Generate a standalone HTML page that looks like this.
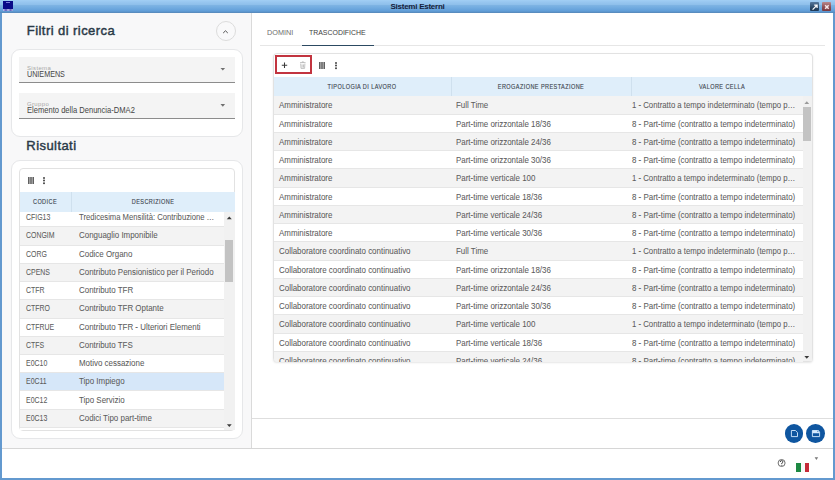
<!DOCTYPE html>
<html><head><meta charset="utf-8">
<style>
*{box-sizing:border-box;margin:0;padding:0}
html,body{width:835px;height:480px;overflow:hidden;background:#6399cf;font-family:"Liberation Sans",sans-serif;position:relative}
div,span{position:absolute}
#title{left:0;top:0;width:835px;height:13px;background:linear-gradient(#a2cff4 0px,#98c7f0 2px,#8fc0eb 4.5px,#7db3e3 5.5px,#70aadf 8px,#619ed8 11px,#5b92c8 12px,#5686b6 13px)}
#title .t{left:0;width:835px;top:2px;line-height:9px;text-align:center;font:bold 8px "Liberation Sans",sans-serif;color:#15203a;letter-spacing:-0.25px}
#client{left:2px;top:13px;width:831px;height:465px;background:#fff}
#leftp{left:2px;top:13px;width:249px;height:435px;background:#f8f8f9}
#vdiv{left:251px;top:13px;width:1px;height:435px;background:#dadada}
#hdiv{left:2px;top:448px;width:831px;height:1px;background:#d6d6d6}
.h{font-weight:normal;font-size:13px;line-height:13px;color:#2a3a48;letter-spacing:0.44px;-webkit-text-stroke:0.45px #2a3a48;white-space:nowrap}
.card{background:#fff;border:1px solid #e6e7e9;border-radius:9px}
.field{background:#f4f4f4;border-bottom:1.5px solid #8c8c8c}
.lbl{font-size:6px;line-height:6px;color:#a8a8a8;letter-spacing:0.35px;white-space:nowrap}
.val{font-size:8px;line-height:8px;color:#444;white-space:nowrap}
.arr{width:0;height:0;border-left:2.5px solid transparent;border-right:2.5px solid transparent;border-top:3px solid #7a7a7a}
.tbox{background:#fff;border:1px solid #e2e2e2;border-radius:4px}
.hdr{background:#dfeefa}
.ht{font-weight:normal;font-size:6.7px;line-height:6px;color:#3a434c;letter-spacing:0.5px;-webkit-text-stroke:0.12px #3a434c;white-space:nowrap}
.rr{left:273.5px;height:18.27px;width:529px;border-bottom:1px solid #e6e6e6;background:#fff}
.rl{left:20px;width:204px;height:18.23px;border-bottom:1px solid #e6e6e6;background:#fff}
.rr span,.rl span{top:5px;font-size:8.4px;line-height:8px;color:#5c5c5c;-webkit-text-stroke:0.05px #5c5c5c;white-space:nowrap;transform:scaleX(0.948);transform-origin:0 0}
.rr span{margin-left:-273.5px}
.rl span{margin-left:-20px;margin-top:-1px}
.alt{background:#f3f3f3}
.sel{background:#d6e7f9}
.sb{background:#f1f1f1}
.thumb{background:#c3c3c3}
.up{width:0;height:0;border-left:2.5px solid transparent;border-right:2.5px solid transparent;border-bottom:2.5px solid #6a6a6a}
.dn{width:0;height:0;border-left:2.5px solid transparent;border-right:2.5px solid transparent;border-top:2.5px solid #6a6a6a}
.bars{width:6px;height:7px;background:linear-gradient(90deg,#555 0,#555 1.5px,transparent 1.5px,transparent 2.25px,#555 2.25px,#555 3.75px,transparent 3.75px,transparent 4.5px,#555 4.5px,#555 6px)}
.dots{width:2px;height:2px;background:#444;border-radius:1px;box-shadow:0 2.6px 0 #444,0 5.2px 0 #444}
.tab{font-size:7.8px;line-height:8px;letter-spacing:-0.5px;white-space:nowrap}
.fab{width:18.8px;height:18.8px;border-radius:50%;background:#0f56a0}
</style></head><body>
<div id="title"><div class="t">Sistemi Esterni</div></div>
<!-- title icons -->
<div style="left:3px;top:1px;width:10px;height:7.5px;background:#0a0a88"></div>
<div style="left:3px;top:8.5px;width:10px;height:2.8px;background:linear-gradient(90deg,#c0c4f0,#5a5ab8 30%,#b8bce8 50%,#6a6ac0 75%,#a8b0e0)"></div>
<div style="left:6px;top:2px;width:4px;height:1px;background:#7a7ad8"></div>
<div style="left:810.4px;top:1.8px;width:8.6px;height:9px;background:linear-gradient(#56799e,#2a4866 60%,#1f3a56);border-radius:1px"></div>
<div style="left:821.5px;top:1.8px;width:9.2px;height:9px;background:linear-gradient(#b9898d,#8a4a50 60%,#7a3a42);border-radius:1px"></div>
<svg style="position:absolute;left:810px;top:1.5px" width="10" height="10" viewBox="0 0 10 10"><path d="M2.6 7.6 L6.6 3.6 M4.2 3.1 H7.1 V6" stroke="#fff" stroke-width="1.25" fill="none"/></svg>
<svg style="position:absolute;left:821.5px;top:1.5px" width="10" height="10" viewBox="0 0 10 10"><path d="M3.1 3.2 L6.7 6.8 M6.7 3.2 L3.1 6.8" stroke="#f6e6e8" stroke-width="1.5" fill="none"/></svg>

<div id="client"></div>
<div id="leftp"></div>
<div id="vdiv"></div>
<div id="hdiv"></div>

<!-- LEFT PANEL -->
<div class="h" style="left:26.8px;top:24.3px">Filtri di ricerca</div>
<div style="left:215.5px;top:21px;width:20px;height:20px;border-radius:50%;border:1px solid #dcdcdc;background:#f9f9fa"></div>
<svg style="position:absolute;left:221px;top:27.5px" width="9" height="7" viewBox="0 0 9 7"><path d="M2.2 5 L4.5 2.8 L6.8 5" stroke="#505050" stroke-width="1" fill="none"/></svg>

<div class="card" style="left:10.5px;top:49.3px;width:232.8px;height:88px"></div>
<div class="field" style="left:19px;top:57px;width:216px;height:26px"></div>
<div class="lbl" style="left:27px;top:65px">Sistema</div>
<div class="val" style="left:27px;top:70.3px;font-size:8.4px;transform:scaleX(0.857);transform-origin:0 0">UNIEMENS</div>

<div class="field" style="left:19px;top:93px;width:216px;height:26px"></div>
<div class="lbl" style="left:27px;top:101px">Gruppo</div>
<div class="val" style="left:27px;top:106px;font-size:8.4px;transform:scaleX(0.905);transform-origin:0 0">Elemento della Denuncia-DMA2</div>


<div class="h" style="left:26.3px;top:138.5px">Risultati</div>
<div class="card" style="left:10.8px;top:160.4px;width:232.5px;height:278.5px"></div>
<div class="tbox" style="left:19px;top:168px;width:216px;height:262.5px;overflow:hidden">
</div>
<svg style="position:absolute;left:27.5px;top:177px" width="6" height="7" viewBox="0 0 6 7"><rect x="0" y="0" width="1.6" height="7" fill="#606060"/><rect x="2.2" y="0" width="1.6" height="7" fill="#606060"/><rect x="4.4" y="0" width="1.6" height="7" fill="#606060"/></svg>
<div class="dots" style="left:43.2px;top:177px"></div>
<div class="hdr" style="left:19.5px;top:192px;width:215px;height:19.5px"></div>
<div style="left:70.75px;top:192px;width:1px;height:19.5px;background:#cfe0ee"></div>
<div style="left:20px;top:211.5px;width:214px;height:218.5px;overflow:hidden">
<div style="left:-20px;top:-211.5px;width:835px;height:480px">
<div class="rl " style="top:209.20px"><span style="left:25.6px;font-size:8.4px;letter-spacing:0;transform:scaleX(0.83);transform-origin:0 0">CFIG13</span><span style="left:78.75px;transform:scaleX(0.916)">Tredicesima Mensilità: Contribuzione …</span></div>
<div class="rl alt" style="top:227.43px"><span style="left:25.6px;font-size:8.4px;letter-spacing:0;transform:scaleX(0.83);transform-origin:0 0">CONGIM</span><span style="left:78.75px">Conguaglio Imponibile</span></div>
<div class="rl " style="top:245.66px"><span style="left:25.6px;font-size:8.4px;letter-spacing:0;transform:scaleX(0.83);transform-origin:0 0">CORG</span><span style="left:78.75px">Codice Organo</span></div>
<div class="rl alt" style="top:263.89px"><span style="left:25.6px;font-size:8.4px;letter-spacing:0;transform:scaleX(0.83);transform-origin:0 0">CPENS</span><span style="left:78.75px">Contributo Pensionistico per il Periodo</span></div>
<div class="rl " style="top:282.12px"><span style="left:25.6px;font-size:8.4px;letter-spacing:0;transform:scaleX(0.83);transform-origin:0 0">CTFR</span><span style="left:78.75px">Contributo TFR</span></div>
<div class="rl alt" style="top:300.35px"><span style="left:25.6px;font-size:8.4px;letter-spacing:0;transform:scaleX(0.83);transform-origin:0 0">CTFRO</span><span style="left:78.75px">Contributo TFR Optante</span></div>
<div class="rl " style="top:318.58px"><span style="left:25.6px;font-size:8.4px;letter-spacing:0;transform:scaleX(0.83);transform-origin:0 0">CTFRUE</span><span style="left:78.75px">Contributo TFR - Ulteriori Elementi</span></div>
<div class="rl alt" style="top:336.81px"><span style="left:25.6px;font-size:8.4px;letter-spacing:0;transform:scaleX(0.83);transform-origin:0 0">CTFS</span><span style="left:78.75px">Contributo TFS</span></div>
<div class="rl " style="top:355.04px"><span style="left:25.6px;font-size:8.4px;letter-spacing:0;transform:scaleX(0.83);transform-origin:0 0">E0C10</span><span style="left:78.75px">Motivo cessazione</span></div>
<div class="rl sel" style="top:373.27px"><span style="left:25.6px;font-size:8.4px;letter-spacing:0;transform:scaleX(0.83);transform-origin:0 0">E0C11</span><span style="left:78.75px">Tipo Impiego</span></div>
<div class="rl " style="top:391.50px"><span style="left:25.6px;font-size:8.4px;letter-spacing:0;transform:scaleX(0.83);transform-origin:0 0">E0C12</span><span style="left:78.75px">Tipo Servizio</span></div>
<div class="rl alt" style="top:409.73px"><span style="left:25.6px;font-size:8.4px;letter-spacing:0;transform:scaleX(0.83);transform-origin:0 0">E0C13</span><span style="left:78.75px">Codici Tipo part-time</span></div>
<div class="rl " style="top:427.96px"><span style="left:25.6px;font-size:8.4px;letter-spacing:0;transform:scaleX(0.83);transform-origin:0 0"></span><span style="left:78.75px"></span></div>
</div></div>
<div class="ht" style="left:45px;top:199px;transform:translateX(-50%) scaleX(0.83)">CODICE</div>
<div class="ht" style="left:153px;top:199px;transform:translateX(-50%) scaleX(0.83)">DESCRIZIONE</div>
<div class="sb" style="left:224px;top:211.5px;width:10.5px;height:218px"></div>

<div class="thumb" style="left:225px;top:240px;width:8px;height:42px"></div>


<!-- RIGHT PANEL -->
<div class="tab" style="left:267.3px;top:29.2px;color:#6e6e6e;letter-spacing:0;font-size:8px;transform:scaleX(0.91);transform-origin:0 0">DOMINI</div>
<div class="tab" style="left:309.3px;top:29.2px;color:#3e3e3e;letter-spacing:0;font-size:8px;transform:scaleX(0.867);transform-origin:0 0">TRASCODIFICHE</div>
<div style="left:259.5px;top:45px;width:565px;height:1px;background:#e6e6e6"></div>
<div style="left:301.5px;top:44.5px;width:72.5px;height:1.7px;background:#2c4a62"></div>

<div class="tbox" style="left:272.5px;top:53.4px;width:540px;height:309px;box-shadow:0 1px 2px rgba(0,0,0,0.10)"></div>
<div style="left:275.2px;top:55.2px;width:37px;height:18.6px;border:2px solid #c2343f"></div>
<svg style="position:absolute;left:280px;top:61px" width="9" height="9" viewBox="0 0 9 9"><path d="M4.5 1.5 V6.9 M1.8 4.2 H7.2" stroke="#3a3a3a" stroke-width="1.05"/></svg>
<svg style="position:absolute;left:299px;top:61px" width="8" height="8" viewBox="0 0 8 8"><path d="M1 1.6 H6.6 M3 1.5 V0.9 H4.6 V1.5 M1.7 2.6 L2 7.4 H5.6 L5.9 2.6 M3.1 3.4 V6.6 M4.5 3.4 V6.6" stroke="#b4b4b4" stroke-width="0.8" fill="none"/></svg>
<svg style="position:absolute;left:319px;top:61.7px" width="6" height="7" viewBox="0 0 6 7"><rect x="0" y="0" width="1.6" height="7" fill="#606060"/><rect x="2.2" y="0" width="1.6" height="7" fill="#606060"/><rect x="4.4" y="0" width="1.6" height="7" fill="#606060"/></svg>
<div class="dots" style="left:334.7px;top:61.8px"></div>

<div class="hdr" style="left:273.5px;top:77.2px;width:538px;height:19px"></div>
<div style="left:451.25px;top:77.2px;width:1px;height:19px;background:#cfe0ee"></div>
<div style="left:631.25px;top:77.2px;width:1px;height:19px;background:#cfe0ee"></div>
<div class="ht" style="left:362px;top:84px;transform:translateX(-50%) scaleX(0.83)">TIPOLOGIA DI LAVORO</div>
<div class="ht" style="left:541.3px;top:84px;transform:translateX(-50%) scaleX(0.83)">EROGAZIONE PRESTAZIONE</div>
<div class="ht" style="left:722px;top:84px;transform:translateX(-50%) scaleX(0.83)">VALORE CELLA</div>

<div style="left:273.5px;top:96.25px;width:529px;height:265.6px;overflow:hidden;border-bottom-left-radius:3px">
<div style="left:-273.5px;top:-96.25px;width:835px;height:480px">
<div class="rr alt" style="top:96.25px"><span style="left:279.4px">Amministratore</span><span style="left:455.9px">Full Time</span><span style="left:632.3px;transform:scaleX(0.928)">1 - Contratto a tempo indeterminato (tempo p…</span></div>
<div class="rr " style="top:114.52px"><span style="left:279.4px">Amministratore</span><span style="left:455.9px">Part-time orizzontale 18/36</span><span style="left:632.3px">8 - Part-time (contratto a tempo indeterminato)</span></div>
<div class="rr alt" style="top:132.79px"><span style="left:279.4px">Amministratore</span><span style="left:455.9px">Part-time orizzontale 24/36</span><span style="left:632.3px">8 - Part-time (contratto a tempo indeterminato)</span></div>
<div class="rr " style="top:151.06px"><span style="left:279.4px">Amministratore</span><span style="left:455.9px">Part-time orizzontale 30/36</span><span style="left:632.3px">8 - Part-time (contratto a tempo indeterminato)</span></div>
<div class="rr alt" style="top:169.33px"><span style="left:279.4px">Amministratore</span><span style="left:455.9px">Part-time verticale 100</span><span style="left:632.3px;transform:scaleX(0.928)">1 - Contratto a tempo indeterminato (tempo p…</span></div>
<div class="rr " style="top:187.60px"><span style="left:279.4px">Amministratore</span><span style="left:455.9px">Part-time verticale 18/36</span><span style="left:632.3px">8 - Part-time (contratto a tempo indeterminato)</span></div>
<div class="rr alt" style="top:205.87px"><span style="left:279.4px">Amministratore</span><span style="left:455.9px">Part-time verticale 24/36</span><span style="left:632.3px">8 - Part-time (contratto a tempo indeterminato)</span></div>
<div class="rr " style="top:224.14px"><span style="left:279.4px">Amministratore</span><span style="left:455.9px">Part-time verticale 30/36</span><span style="left:632.3px">8 - Part-time (contratto a tempo indeterminato)</span></div>
<div class="rr alt" style="top:242.41px"><span style="left:279.4px">Collaboratore coordinato continuativo</span><span style="left:455.9px">Full Time</span><span style="left:632.3px;transform:scaleX(0.928)">1 - Contratto a tempo indeterminato (tempo p…</span></div>
<div class="rr " style="top:260.68px"><span style="left:279.4px">Collaboratore coordinato continuativo</span><span style="left:455.9px">Part-time orizzontale 18/36</span><span style="left:632.3px">8 - Part-time (contratto a tempo indeterminato)</span></div>
<div class="rr alt" style="top:278.95px"><span style="left:279.4px">Collaboratore coordinato continuativo</span><span style="left:455.9px">Part-time orizzontale 24/36</span><span style="left:632.3px">8 - Part-time (contratto a tempo indeterminato)</span></div>
<div class="rr " style="top:297.22px"><span style="left:279.4px">Collaboratore coordinato continuativo</span><span style="left:455.9px">Part-time orizzontale 30/36</span><span style="left:632.3px">8 - Part-time (contratto a tempo indeterminato)</span></div>
<div class="rr alt" style="top:315.49px"><span style="left:279.4px">Collaboratore coordinato continuativo</span><span style="left:455.9px">Part-time verticale 100</span><span style="left:632.3px;transform:scaleX(0.928)">1 - Contratto a tempo indeterminato (tempo p…</span></div>
<div class="rr " style="top:333.76px"><span style="left:279.4px">Collaboratore coordinato continuativo</span><span style="left:455.9px">Part-time verticale 18/36</span><span style="left:632.3px">8 - Part-time (contratto a tempo indeterminato)</span></div>
<div class="rr alt" style="top:352.03px"><span style="left:279.4px">Collaboratore coordinato continuativo</span><span style="left:455.9px">Part-time verticale 24/36</span><span style="left:632.3px">8 - Part-time (contratto a tempo indeterminato)</span></div>
</div></div>
<div class="sb" style="left:802.5px;top:96.25px;width:9px;height:265px"></div>

<div class="thumb" style="left:803px;top:107px;width:8px;height:34px"></div>


<svg style="position:absolute;left:0;top:0" width="835" height="480" viewBox="0 0 835 480">
<path d="M226.8 219.2 H231.8 L229.3 216.5 Z" fill="#3a3a3a"/>
<path d="M220.5 67.9 H225.1 L222.8 70.5 Z" fill="#707070"/>
<path d="M220.5 104.1 H225.1 L222.8 106.7 Z" fill="#707070"/>
<path d="M226.9 424.3 H231.7 L229.3 426.9 Z" fill="#3a3a3a"/>
<path d="M804.4 104 H809.2 L806.8 101.3 Z" fill="#9a9a9a"/>
<path d="M804.4 356 H809.2 L806.8 358.8 Z" fill="#3a3a3a"/>
</svg>
<div style="left:252px;top:418px;width:581px;height:1px;background:#dedede"></div>
<div class="fab" style="left:784.5px;top:423.9px"></div>
<div class="fab" style="left:806.3px;top:423.9px"></div>
<svg style="position:absolute;left:0;top:0" width="835" height="480" viewBox="0 0 835 480">
<path d="M791.4 430.5 H795.4 L797.5 432.6 V436.6 H791.4 Z" stroke="#d6ebff" stroke-width="0.9" fill="none"/>
<path d="M812.4 430.5 H818.2 L819.6 431.9 V436.6 H812.4 Z" stroke="#d6ebff" stroke-width="0.9" fill="none"/>
<path d="M812.4 430.5 H818.2 L819.1 431.4 V433.2 H812.4 Z" fill="#d6ebff"/>
<path d="M817.4 430.6 L818.6 431.8 H817.4 Z" fill="#1059a5"/>
</svg>


<!-- footer -->
<svg style="position:absolute;left:0;top:0" width="835" height="480" viewBox="0 0 835 480">
<circle cx="781.6" cy="463" r="3.5" stroke="#555" stroke-width="0.85" fill="none"/>
<path d="M780.3 462 Q780.3 460.6 781.6 460.6 Q782.9 460.6 782.9 461.8 Q782.9 462.6 781.8 463.1 V464.1" stroke="#333" stroke-width="0.95" fill="none"/>
<circle cx="781.8" cy="465.3" r="0.55" fill="#333"/>
<path d="M814.6 457.3 H818.2 L816.4 460 Z" fill="#7a7a7a"/>
</svg>
<div style="left:796.3px;top:463.4px;width:4.7px;height:8.5px;background:#1d8943"></div>
<div style="left:801px;top:463.4px;width:3.6px;height:8.5px;background:#f6fbf8"></div>
<div style="left:804.6px;top:463.4px;width:4.6px;height:8.5px;background:#c52a38"></div>

</body></html>
